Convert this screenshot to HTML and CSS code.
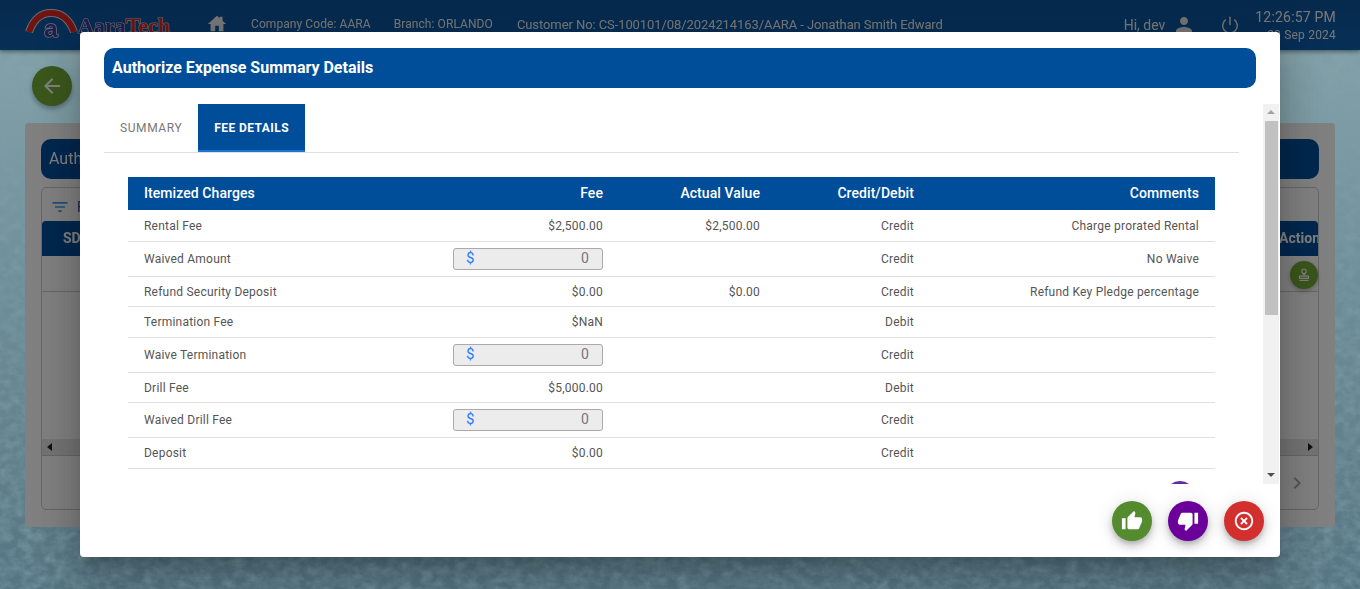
FILE: index.html
```html
<!DOCTYPE html>
<html lang="en">
<head>
<meta charset="utf-8">
<title>Authorize Expense Summary Details</title>
<link rel="stylesheet" href="styles.css">
</head>
<body>
<svg class="texture" aria-hidden="true">
  <defs>
    <filter id="paper" x="0" y="0" width="100%" height="100%">
      <feTurbulence type="fractalNoise" baseFrequency="0.09 0.12" numOctaves="4" seed="7"/>
      <feColorMatrix type="matrix" values="0 0 0 0 0.2  0 0 0 0 0.33  0 0 0 0 0.39  0.9 0.9 0 0 -0.68"/>
    </filter>
  </defs>
  <rect width="100%" height="100%" filter="url(#paper)"/>
</svg>
<div class="page">
  <header class="topbar">
    <svg class="logo" viewBox="0 0 150 30" aria-label="AaraTech logo">
      <path class="logo-arc-edge" d="M3 24 C8 10 16 5 25 5 C34 5 43 10 48 24"/>
      <path class="logo-arc" d="M3 24 C8 10 16 5 25 5 C34 5 43 10 48 24"/>
      <text class="logo-a" x="25" y="29">a</text>
      <text class="logo-word" x="52" y="25"><tspan class="logo-aara">Aara</tspan><tspan class="logo-tech">Tech</tspan></text>
    </svg>
    <svg class="home" viewBox="0 0 24 24"><path d="M10 20v-6h4v6h5v-8h3L18 8.4V4h-3v1.7L12 3 2 12h3v8z"/></svg>
    <span class="meta meta-company">Company Code: AARA</span>
    <span class="meta meta-branch">Branch: ORLANDO</span>
    <span class="meta meta-customer">Customer No: CS-100101/08/2024214163/AARA - Jonathan Smith Edward</span>
    <span class="hi">Hi, dev</span>
    <svg class="person" viewBox="0 0 24 24"><path d="M12 12c2.21 0 4-1.79 4-4s-1.79-4-4-4-4 1.79-4 4 1.79 4 4 4zm0 2c-2.67 0-8 1.34-8 4v2h16v-2c0-2.66-5.33-4-8-4z"/></svg>
    <svg class="power" viewBox="0 0 24 24"><path d="M12 3v9M7.3 6.2a8 8 0 1 0 9.4 0"/></svg>
    <div class="clock">
      <span class="time">12:26:57 PM</span>
      <span class="date">20 Sep 2024</span>
    </div>
  </header>
  <main class="main">
    <button class="back" type="button" aria-label="Back">
      <svg viewBox="0 0 24 24"><path d="M20 11H7.83l5.59-5.59L12 4l-8 8 8 8 1.41-1.41L7.83 13H20v-2z"/></svg>
    </button>
    <section class="card">
      <div class="card-title">Authorize Expense Summary</div>
      <div class="panel">
        <div class="filter-row">
          <svg viewBox="0 0 24 24"><path d="M10 18h4v-2h-4v2zM3 6v2h18V6H3zm3 7h12v-2H6v2z"/></svg>
          <span class="filter-label">Filters</span>
        </div>
        <div class="bg-head"><span>SD</span><span class="action-head">Action</span></div>
        <div class="bg-row">
          <span class="stamp">
            <svg viewBox="0 0 24 24">
              <circle class="stamp-line" cx="12" cy="7" r="3"/>
              <path class="stamp-line" d="M11 10v3.5h-5v3h12v-3h-5V10"/>
              <path d="M6 18.5h12V20H6z"/>
            </svg>
          </span>
        </div>
        <div class="bg-body"></div>
        <div class="hscroll"><i class="tri-left"></i><i class="tri-right"></i></div>
        <div class="pager">
          <svg viewBox="0 0 24 24"><path d="M10 6L8.59 7.41 13.17 12l-4.58 4.59L10 18l6-6z"/></svg>
        </div>
      </div>
    </section>
  </main>
</div>
<div class="modal" role="dialog">
  <h1 class="modal-title">Authorize Expense Summary Details</h1>
  <div class="modal-body">
    <div class="scroller">
      <nav class="tabs">
        <span class="tab">SUMMARY</span>
        <span class="tab tab-active">FEE DETAILS</span>
      </nav>
      <table class="fees">
        <colgroup>
          <col class="c1"><col class="c2"><col class="c3"><col class="c4"><col class="c5">
        </colgroup>
        <thead>
          <tr><th>Itemized Charges</th><th>Fee</th><th>Actual Value</th><th>Credit/Debit</th><th>Comments</th></tr>
        </thead>
        <tbody>
          <tr><td>Rental Fee</td><td>$2,500.00</td><td>$2,500.00</td><td>Credit</td><td>Charge prorated Rental</td></tr>
          <tr class="with-input"><td>Waived Amount</td><td><div class="money"><span class="cur">$</span><span class="amt">0</span></div></td><td></td><td>Credit</td><td>No Waive</td></tr>
          <tr><td>Refund Security Deposit</td><td>$0.00</td><td>$0.00</td><td>Credit</td><td>Refund Key Pledge percentage</td></tr>
          <tr><td>Termination Fee</td><td>$NaN</td><td></td><td>Debit</td><td></td></tr>
          <tr class="with-input"><td>Waive Termination</td><td><div class="money"><span class="cur">$</span><span class="amt">0</span></div></td><td></td><td>Credit</td><td></td></tr>
          <tr><td>Drill Fee</td><td>$5,000.00</td><td></td><td>Debit</td><td></td></tr>
          <tr class="with-input"><td>Waived Drill Fee</td><td><div class="money"><span class="cur">$</span><span class="amt">0</span></div></td><td></td><td>Credit</td><td></td></tr>
          <tr><td>Deposit</td><td>$0.00</td><td></td><td>Credit</td><td></td></tr>
        </tbody>
      </table>
      <span class="peek"></span>
    </div>
    <div class="scrollbar">
      <i class="sb-up"></i>
      <div class="sb-track"><div class="sb-thumb"></div></div>
      <i class="sb-down"></i>
    </div>
  </div>
  <div class="modal-actions">
    <button class="fab fab-green" type="button" aria-label="Approve">
      <svg viewBox="0 0 24 24"><path d="M1 21h4V9H1v12zm22-11c0-1.1-.9-2-2-2h-6.31l.95-4.57.03-.32c0-.41-.17-.79-.44-1.06L14.17 1 7.59 7.59C7.22 7.95 7 8.45 7 9v10c0 1.1.9 2 2 2h9c.83 0 1.54-.5 1.84-1.22l3.02-7.05c.09-.23.14-.47.14-.73v-2z"/></svg>
    </button>
    <button class="fab fab-purple" type="button" aria-label="Reject">
      <svg viewBox="0 0 24 24"><path d="M15 3H6c-.83 0-1.54.5-1.84 1.22l-3.02 7.05c-.09.23-.14.47-.14.73v2c0 1.1.9 2 2 2h6.31l-.95 4.57-.03.32c0 .41.17.79.44 1.06L9.83 23l6.59-6.59c.36-.36.58-.86.58-1.41V5c0-1.1-.9-2-2-2zm4 0v12h4V3h-4z"/></svg>
    </button>
    <button class="fab fab-red" type="button" aria-label="Close">
      <svg viewBox="0 0 24 24"><path d="M14.59 8L12 10.59 9.41 8 8 9.41 10.59 12 8 14.59 9.41 16 12 13.41 14.59 16 16 14.59 13.41 12 16 9.41 14.59 8zM12 2C6.47 2 2 6.47 2 12s4.47 10 10 10 10-4.47 10-10S17.53 2 12 2zm0 18c-4.41 0-8-3.59-8-8s3.59-8 8-8 8 3.59 8 8-3.59 8-8 8z"/></svg>
    </button>
  </div>
</div>
</body>
</html>
```
FILE: styles.css
```css
* { box-sizing: border-box; }
html, body { margin: 0; height: 589px; overflow: hidden; }
body {
  position: relative;
  font-family: Roboto, "Liberation Sans", sans-serif;
  background: linear-gradient(180deg, #84a2a9 50px, #6f8f9a 45%, #567582 100%);
  color: #444;
}
.texture { position: absolute; inset: 0; width: 1360px; height: 589px; }
.page { position: relative; height: 589px; display: flex; flex-direction: column; }

/* the page under the dialog is dimmed */
.topbar, .back, .card { filter: brightness(.5); }

/* top bar */
.topbar {
  height: 50px;
  flex: none;
  display: flex;
  align-items: center;
  color: #fff;
  background: linear-gradient(180deg, #0c5399 0%, #0e5fae 100%);
  box-shadow: 0 2px 4px rgba(0,0,0,.4);
  position: relative;
}
.logo { width: 150px; height: 30px; margin: -4px 0 0 26px; flex: none; overflow: visible; }
.logo-arc-edge { fill: none; stroke: #d8d8d8; stroke-width: 8; }
.logo-arc { fill: none; stroke: #e02626; stroke-width: 6; }
.logo-a {
  font: 700 24px "Liberation Sans", sans-serif;
  fill: #3c3ca8; text-anchor: middle;
  stroke: #d8d8d8; stroke-width: 1.6px; paint-order: stroke;
}
.logo-word {
  font: 700 22px "Liberation Serif", serif;
  stroke: #d8d8d8;
  stroke-width: 1.2px;
  paint-order: stroke;
}
.logo-aara { fill: #3c3ca8; }
.logo-tech { fill: #e02a2a; }
.home { width: 22px; height: 22px; margin: -2px 0 0 30px; fill: #f0f0f0; flex: none; }
.meta { font-size: 12px; letter-spacing: .08px; white-space: nowrap; color: #f0f0f0; flex: none; }
.meta-company { margin: -3px 0 0 23px; }
.meta-branch { margin: -3px 0 0 23px; }
.meta-customer { margin: -1px 0 0 24px; font-size: 13px; letter-spacing: -.085px; }
.hi { margin: 0 0 0 auto; font-size: 14px; color: #f0f0f0; }
.person { width: 24px; height: 24px; margin: 0 0 0 7px; fill: #e8e8e8; flex: none; }
.power { width: 22px; height: 22px; margin: 0 0 0 23px; fill: none; stroke: #e8e8e8; stroke-width: 1.6; flex: none; }
.clock { display: flex; flex-direction: column; align-items: flex-end; margin: 0 24px 0 14px; color: #f0f0f0; }
.time { font-size: 14px; line-height: 20px; letter-spacing: .2px; }
.date { font-size: 12px; line-height: 16px; letter-spacing: .2px; }

/* page underneath */
.main { flex: 1; padding: 16px 25px 0; display: flex; flex-direction: column; }
.back {
  width: 40px; height: 40px; margin: 0 0 17px 7px; padding: 8px;
  border: 0; border-radius: 50%;
  background: #76b038;
  box-shadow: 0 3px 5px rgba(0,0,0,.3);
}
.back svg { display: block; fill: #fff; }
.card { height: 404px; padding: 16px; background: #fff; border-radius: 4px; display: flex; flex-direction: column; }
.card-title {
  height: 40px; flex: none; padding: 0 8px; border-radius: 10px;
  background: #00509e; color: #fff; font-size: 16px; line-height: 40px;
}
.panel {
  margin-top: 8px; height: 323px; flex: none;
  border: 1px solid #ccc; border-radius: 5px;
  display: flex; flex-direction: column;
}
.filter-row { height: 33px; flex: none; padding: 9px 0 0 8px; display: flex; gap: 7px; }
.filter-row svg { display: block; width: 20px; height: 20px; fill: #4a9fe8; flex: none; }
.filter-label { font-size: 14px; line-height: 20px; color: #5040a8; }
.bg-head {
  height: 35px; flex: none; display: flex; justify-content: space-between;
  padding: 0 0 0 21px; background: #00509e; color: #fff;
  font-size: 14px; font-weight: 700; line-height: 35px;
  border-radius: 4px 4px 0 0;
  overflow: hidden;
}
.action-head { margin-right: -2px; }
.bg-row { height: 36px; flex: none; border-bottom: 1px solid #ccc; display: flex; justify-content: flex-end; padding: 5px 0 0; }
.stamp { width: 28px; height: 28px; border-radius: 50%; background: #74ab38; padding: 5px; box-shadow: 0 2px 4px rgba(0,0,0,.25); }
.stamp svg { display: block; fill: #fff; }
.stamp .stamp-line { fill: none; stroke: #fff; stroke-width: 1.5; }
.bg-body { flex: 1; }
.hscroll { height: 17px; flex: none; background: #e8e8e8; border-bottom: 1px solid #ccc; display: flex; justify-content: space-between; align-items: center; padding: 0 5px; }
.tri-left { border: 4px solid transparent; border-left: 0; border-right: 5px solid #222; }
.tri-right { border: 4px solid transparent; border-right: 0; border-left: 5px solid #222; }
.pager { height: 53px; flex: none; display: flex; justify-content: flex-end; align-items: center; padding-right: 9px; }
.pager svg { width: 24px; height: 24px; fill: #aaa; }

/* dialog */
.modal {
  position: absolute; left: 80px; top: 32px; width: 1200px; height: 525px;
  padding: 16px 0 0 24px;
  background: #fff; border-radius: 4px;
  box-shadow: 0 11px 15px -7px rgba(0,0,0,.2), 0 24px 38px 3px rgba(0,0,0,.14), 0 9px 46px 8px rgba(0,0,0,.12);
  display: flex; flex-direction: column;
}
.modal-title {
  margin: 0 24px 0 0; height: 40px; padding: 0 8px; flex: none;
  background: #004e9a; color: #fff; border-radius: 10px;
  font-size: 16px; font-weight: 700; line-height: 40px;
}
.modal-body { margin: 16px 1px 0 0; height: 380px; flex: none; display: flex; }
.scroller { flex: 1; overflow: hidden; position: relative; padding-right: 24px; }
.tabs { height: 49px; display: flex; border-bottom: 1px solid #e0e0e0; }
.tab { height: 48px; padding: 0 16px; font-size: 12px; font-weight: 400; letter-spacing: .6px; line-height: 48px; color: #777; }
.tab-active { background: #004e9a; color: #fff; border-bottom: 2px solid #1976d2; font-weight: 700; letter-spacing: .42px; }

.fees { margin: 24px 0 0 24px; width: 1087px; border-collapse: collapse; table-layout: fixed; font-size: 12px; letter-spacing: .22px; color: #555; }
.c1 { width: 300px; } .c2 { width: 191px; } .c3 { width: 157px; } .c4 { width: 154px; } .c5 { width: 285px; }
.fees th { height: 33px; padding: 0 16px 1px; background: #004e9a; color: #fff; font-size: 14px; font-weight: 500; letter-spacing: .07px; text-align: right; }
.fees th:first-child, .fees td:first-child { text-align: left; }
.fees td { height: 30.5px; padding: .8px 16px 0; text-align: right; border-bottom: 1px solid #e0e0e0; }
.fees tbody tr:first-child td { height: 31px; }
.fees .with-input td { height: 35px; }
.money {
  width: 150px; height: 22px; margin-left: auto; padding: 0 13px 2px 12px;
  display: flex; justify-content: space-between; align-items: center;
  background: #ececec; border: 1px solid #aaa; border-radius: 3px;
  font-size: 14px; color: #777;
}
.cur { color: #2979ff; font-size: 15px; }
.peek { position: absolute; left: 1061px; top: 377px; width: 30px; height: 30px; border-radius: 50%; background: #5e2ca5; }

.scrollbar { width: 16px; flex: none; background: #f1f1f1; display: flex; flex-direction: column; align-items: center; }
.sb-up, .sb-down { flex: none; width: 0; height: 0; border: 4px solid transparent; border-top-width: 0; border-bottom: 4px solid #a3a3a3; margin: 6px 0 7px; }
.sb-down { border-top: 4px solid #505050; border-bottom-width: 0; }
.sb-track { flex: 1; width: 100%; padding: 0 1px 0 2px; }
.sb-thumb { height: 194px; background: #c1c1c1; }

.modal-actions { flex: 1; display: flex; justify-content: flex-end; gap: 16px; padding: 17px 16px 0 0; }
.fab { width: 40px; height: 40px; padding: 9px; border: 0; border-radius: 50%; box-shadow: 0 3px 5px -1px rgba(0,0,0,.2), 0 6px 10px 0 rgba(0,0,0,.14), 0 1px 18px 0 rgba(0,0,0,.12); }
.fab svg { display: block; fill: #fff; }
.fab-green { background: #558b2f; }
.fab-purple { background: #6a0099; }
.fab-red { background: #d32f2f; }
```
